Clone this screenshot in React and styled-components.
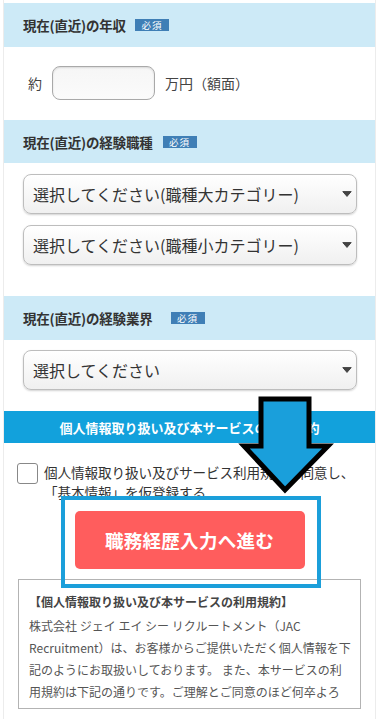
import React from "react"
import styled, { createGlobalStyle } from "styled-components"

const GlobalStyle = createGlobalStyle`
  html, body {
    margin: 0;
    padding: 0;
    background: #fff;
  }
  body {
    font-family: "Noto Sans CJK JP", "Noto Sans", sans-serif;
    color: #333;
  }
`

const Page = styled.div`
  position: relative;
  margin: 0 3px;
  padding-top: 3px;
  height: 719px;
  overflow: hidden;
  border-left: 1px solid #ececec;
  border-right: 1px solid #ececec;
  box-sizing: border-box;
  background: #fff;
`

const SectionHead = styled.div`
  display: flex;
  align-items: center;
  height: ${p => p.h || 44}px;
  padding-left: 19px;
  background: #cdeaf7;
  font-size: 13.5px;
  font-weight: bold;
  color: #333;
  letter-spacing: -0.2px;
`

const Badge = styled.span`
  display: inline-flex;
  align-items: center;
  justify-content: center;
  margin-left: ${p => p.gap || 9}px;
  width: 34px;
  height: 12px;
  background: #3f7fb6;
  color: #fff;
  font-size: 9.5px;
  font-weight: normal;
  letter-spacing: 1px;
`

const SectionBody = styled.div`
  display: flex;
  flex-direction: column;
  gap: 11px;
  padding: ${p => p.pad};
`

const SalaryRow = styled.div`
  display: flex;
  align-items: center;
  padding-left: 24px;
  font-size: 14px;
  color: #444;
`

const SalaryInput = styled.input`
  width: 103px;
  height: 34px;
  box-sizing: border-box;
  margin: 0 10px 0 10px;
  border: 1px solid #a9a9a9;
  border-radius: 8px;
  background: linear-gradient(#f6f6f6, #fbfbfb);
  box-shadow: inset 0 1px 2px rgba(0, 0, 0, 0.12);
`

const SelectWrap = styled.div`
  position: relative;
  width: 334px;
  height: 40px;
`

const Select = styled.select`
  appearance: none;
  width: 100%;
  height: 100%;
  box-sizing: border-box;
  padding: 0 0 0 9px;
  border: 1px solid #bdbdbd;
  border-radius: 8px;
  background: linear-gradient(#ffffff, #f0f0f0);
  box-shadow: 0 1px 2px rgba(0, 0, 0, 0.18);
  font-family: "Noto Sans CJK JP", sans-serif;
  font-size: 16px;
  color: #333;
`

const Caret = styled.svg`
  position: absolute;
  right: 5px;
  top: 17px;
  pointer-events: none;
`

const TermsBar = styled.div`
  height: 32px;
  display: flex;
  align-items: center;
  justify-content: center;
  background: #12a1dc;
  color: #fff;
  font-size: 13px;
  font-weight: bold;
`

const CheckRow = styled.label`
  display: flex;
  align-items: flex-start;
  gap: 6px;
  padding: 19px 0 0 13px;
  font-size: 13.6px;
  line-height: 20px;
  color: #333;
  white-space: nowrap;
  letter-spacing: -0.1px;
`

const CheckBox = styled.span`
  flex: none;
  width: 19px;
  height: 19px;
  margin-top: 1px;
  border: 1px solid #888;
  border-radius: 3px;
  background: #fff;
`

const ButtonWrap = styled.div`
  position: relative;
  width: 230px;
  margin: 9px auto 0;
`

const Frame = styled.div`
  position: absolute;
  left: -14px;
  right: -16px;
  top: -15px;
  bottom: -19px;
  border: 4px solid #1b9fda;
  z-index: 2;
  pointer-events: none;
`

const NextButton = styled.button`
  display: block;
  width: 100%;
  height: 58px;
  border: none;
  border-radius: 5px;
  background: #ff5d5d;
  color: #fff;
  font-family: "Noto Sans CJK JP", sans-serif;
  font-size: 18.5px;
  font-weight: bold;
  letter-spacing: 0.3px;
`

const TermsBox = styled.div`
  margin: 10px 14px 0;
  height: 130px;
  box-sizing: border-box;
  padding: 11px 4px 0 10px;
  border: 1px solid #b3b3b3;
  overflow: hidden;
  font-size: 12px;
  line-height: 22px;
  color: #555;
`

const TermsTitle = styled.div`
  font-weight: bold;
  color: #444;
  margin-bottom: 2px;
`

const TermsLine = styled.div`
  white-space: nowrap;
`

const Arrow = styled.svg`
  position: absolute;
  left: 230px;
  top: 392px;
  z-index: 3;
`

const termsLines = [
  "株式会社 ジェイ エイ シー リクルートメント（JAC",
  "Recruitment）は、お客様からご提供いただく個人情報を下",
  "記のようにお取扱いしております。 また、本サービスの利",
  "用規約は下記の通りです。ご理解とご同意のほど何卒よろ",
]

function SelectBox({ label }) {
  return (
    <SelectWrap>
      <Select defaultValue="">
        <option value="">{label}</option>
      </Select>
      <Caret width="10" height="6" viewBox="0 0 10 6">
        <path d="M0.8 0.6 L9.2 0.6 L5 5.4 Z" fill="#444" stroke="#444" strokeLinejoin="round" />
      </Caret>
    </SelectWrap>
  )
}

export default function App() {
  return (
    <>
      <GlobalStyle />
      <Page>
        <SectionHead>現在(直近)の年収<Badge>必須</Badge></SectionHead>
        <SectionBody pad="19px 0 20px">
          <SalaryRow>
            約<SalaryInput type="text" />万円（額面）
          </SalaryRow>
        </SectionBody>

        <SectionHead h={43}>現在(直近)の経験職種<Badge gap={10}>必須</Badge></SectionHead>
        <SectionBody pad="11px 0 31px 19px">
          <SelectBox label="選択してください(職種大カテゴリー)" />
          <SelectBox label="選択してください(職種小カテゴリー)" />
        </SectionBody>

        <SectionHead>現在(直近)の経験業界<Badge gap={18}>必須</Badge></SectionHead>
        <SectionBody pad="10px 0 21px 19px">
          <SelectBox label="選択してください" />
        </SectionBody>

        <TermsBar>個人情報取り扱い及び本サービスの利用規約</TermsBar>

        <CheckRow>
          <CheckBox />
          <span>個人情報取り扱い及びサービス利用規約に同意し、<br />「基本情報」を仮登録する</span>
        </CheckRow>

        <ButtonWrap>
          <Frame />
          <NextButton>職務経歴入力へ進む</NextButton>
        </ButtonWrap>

        <TermsBox>
          <TermsTitle>【個人情報取り扱い及び本サービスの利用規約】</TermsTitle>
          {termsLines.map(line => (
            <TermsLine key={line}>{line}</TermsLine>
          ))}
        </TermsBox>

        <Arrow width="104" height="106" viewBox="0 0 104 106">
          <path
            d="M27 7 L75 7 L75 54 L94 54 L51 98 L10 54 L27 54 Z"
            fill="#1a9fdb"
            stroke="#000"
            strokeWidth="5"
            strokeLinejoin="miter"
          />
        </Arrow>
      </Page>
    </>
  )
}
